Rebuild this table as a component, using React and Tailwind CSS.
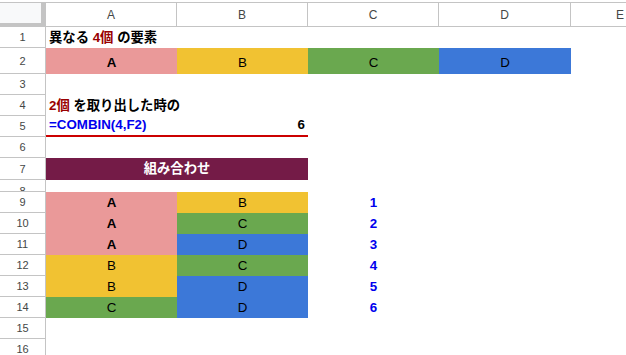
import React from "react";

const FONT = { fontFamily: '"Liberation Sans", Arial, "Noto Sans CJK JP", sans-serif' };

const RH = ({ n, className = "" }) => (
  <div className={"flex items-center justify-center border-b border-r border-[#c4c4c4] bg-white text-[11px] leading-[14px] text-[#444746] overflow-hidden " + className}>
    {n}
  </div>
);

const Cell = ({ className = "", children }) => (
  <div className={"flex items-end pb-[2px] leading-[16px] text-[13.33px] overflow-visible whitespace-nowrap " + className}>
    {children}
  </div>
);

const PINK = "bg-[#ea9999]";
const YEL = "bg-[#f1c232]";
const GRN = "bg-[#6aa84f]";
const BLU = "bg-[#3c78d8]";

const pairs = [
  ["A", PINK, true, "B", YEL, 1],
  ["A", PINK, true, "C", GRN, 2],
  ["A", PINK, true, "D", BLU, 3],
  ["B", YEL, false, "C", GRN, 4],
  ["B", YEL, false, "D", BLU, 5],
  ["C", GRN, false, "D", BLU, 6],
];

export default function App() {
  return (
    <div className="w-[626px] h-[355px] overflow-hidden bg-white pt-[2px] text-black" style={FONT}>
      <div className="grid grid-cols-[46px_131px_131px_131px_132px_1fr] grid-rows-[25px_21px_26px_21px_21px_21px_21px_22px_12px_21px_21px_21px_21px_21px_21px_21px_21px]">
        {/* header row */}
        <div className="border-t border-[#c4c4c4] bg-white">
          <div className="h-full w-full bg-[#f8f9fa] border-r-[5px] border-b-[4px] border-[#c4c4c4]" />
        </div>
        {["A", "B", "C", "D"].map((c) => (
          <div key={c} className="flex items-center justify-center border-t border-b border-r border-[#c4c4c4] text-[12px] text-[#444746]">
            {c}
          </div>
        ))}
        <div className="flex items-center pl-[45px] border-t border-b border-[#c4c4c4] text-[12px] text-[#444746]">E</div>

        {/* row 1 */}
        <RH n="1" />
        <Cell className="col-span-5 pl-[3px] font-bold">
          異なる&nbsp;<span className="text-[#990000]">4個</span>&nbsp;の要素
        </Cell>

        {/* row 2 */}
        <RH n="2" />
        <Cell className={PINK + " justify-center font-bold pb-[3px]"}>A</Cell>
        <Cell className={YEL + " justify-center pb-[3px]"}>B</Cell>
        <Cell className={GRN + " justify-center pb-[3px]"}>C</Cell>
        <Cell className={BLU + " justify-center pb-[3px]"}>D</Cell>
        <div />

        {/* row 3 */}
        <RH n="3" />
        <div className="col-span-5" />

        {/* row 4 */}
        <RH n="4" />
        <Cell className="col-span-5 pl-[3px] font-bold">
          <span className="text-[#990000]">2個</span>&nbsp;を取り出した時の
        </Cell>

        {/* row 5 */}
        <RH n="5" />
        <Cell className="col-span-2 justify-between px-[3px] pb-[1px] font-bold border-b-2 border-[#cc0000]">
          <span className="text-[#0000ee]">=COMBIN(4,F2)</span>
          <span>6</span>
        </Cell>
        <div className="col-span-3" />

        {/* row 6 */}
        <RH n="6" />
        <div className="col-span-5" />

        {/* row 7 */}
        <RH n="7" />
        <Cell className="col-span-2 justify-center bg-[#741b47] text-white font-bold pb-[3px]">組み合わせ</Cell>
        <div className="col-span-3" />

        {/* row 8 */}
        <div className="flex items-start justify-center pt-[4px] border-b border-r border-[#c4c4c4] text-[11px] leading-[14px] text-[#444746] overflow-hidden">8</div>
        <div className="col-span-5" />

        {pairs.map(([a, ac, ab, b, bc, n], i) => (
          <React.Fragment key={n}>
            <RH n={String(9 + i)} />
            <Cell className={ac + " justify-center " + (ab ? "font-bold" : "")}>{a}</Cell>
            <Cell className={bc + " justify-center"}>{b}</Cell>
            <Cell className="justify-center font-bold text-[#0000ee]">{n}</Cell>
            <div className="col-span-2" />
          </React.Fragment>
        ))}

        <RH n="15" />
        <div className="col-span-5" />
        <RH n="16" />
        <div className="col-span-5" />
      </div>
    </div>
  );
}
